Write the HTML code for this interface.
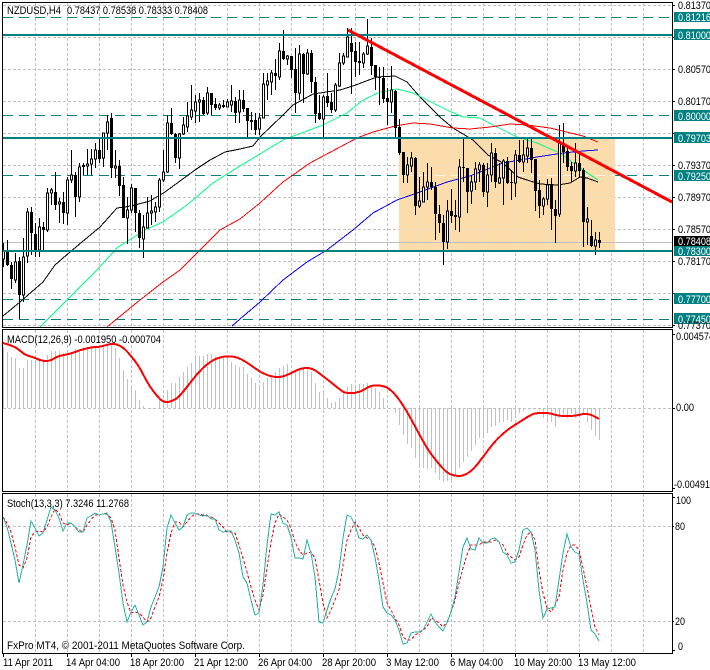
<!DOCTYPE html>
<html><head><meta charset="utf-8"><title>NZDUSD,H4</title>
<style>
html,body{margin:0;padding:0;background:#fff;width:710px;height:670px;overflow:hidden}
svg{display:block}
text{font-family:"Liberation Sans",sans-serif;font-size:11px;fill:#000}
.w{fill:#fff}
</style></head><body>
<svg width="710" height="670" viewBox="0 0 710 670" xmlns="http://www.w3.org/2000/svg">
<rect width="710" height="670" fill="#fff"/>
<g shape-rendering="crispEdges">
<!-- grid main -->
<path d="M35.5 3V327M67.5 3V327M99.5 3V327M131.5 3V327M163.5 3V327M195.5 3V327M227.5 3V327M259.5 3V327M291.5 3V327M323.5 3V327M355.5 3V327M387.5 3V327M419.5 3V327M451.5 3V327M483.5 3V327M515.5 3V327M547.5 3V327M579.5 3V327M611.5 3V327M643.5 3V327M3 5.5H672M3 37.5H672M3 69.5H672M3 101.5H672M3 133.5H672M3 165.5H672M3 197.5H672M3 229.5H672M3 261.5H672M3 293.5H672M3 325.5H672" stroke="#c0c0c0" stroke-dasharray="3 2" fill="none"/>
<!-- levels -->
<path d="M3 17.5H672M3 115.5H672M3 175.5H672M3 299.5H672M3 319.5H672" stroke="#008080" stroke-dasharray="10 6" fill="none"/>
<rect x="399" y="138" width="216" height="112" fill="#fddcab"/>
<path d="M419.5 138V250M451.5 138V250M483.5 138V250M515.5 138V250M547.5 138V250M579.5 138V250M611.5 138V250M399 165.5H615M399 197.5H615M399 229.5H615" stroke="#e9e2c6" stroke-dasharray="3 2" fill="none"/>
<path d="M403 175.5H615" stroke="#fff6e6" stroke-dasharray="10 6" fill="none"/>
<path d="M3 242.5H672" stroke="#c0c0c0" fill="none"/>
<!-- MAs -->
<path d="M3 316L20 302L43 282L55 265L70 252L100 227L117 208L125 207L135 205L150 201L165 192L180 181L195 170L210 160L225 152L240 149L253 146L260 137L283 115L293 105L313 94L340 90L353 86L377 77L395 76L407 82L420 97L440 117L453 128L473 140L480 147L488 155L503 163L518 177L527 180L540 184L558 185L570 183L580 177L587 178L598 182" stroke="#000" fill="none"/>
<path d="M40 327L67 300L97 270L118 247L147 229L163 222L187 205L213 183L240 166L283 140L323 125L347 113L363 100L380 92L397 89L413 93L427 100L447 110L463 117L480 118L493 125L517 137L537 143L560 153L580 168L598 180" stroke="#00ff7f" fill="none"/>
<path d="M107 327L140 300L163 282L180 270L200 250L220 230L240 219L260 203L283 182L310 163L340 147L357 138L373 132L395 126L413 123L430 124L453 128L470 129L490 127L510 124L527 125L550 128L583 136L598 142" stroke="#ff0000" fill="none"/>
<path d="M232 326L240 319L260 302L283 280L307 262L327 250L353 230L373 213L397 200L420 192L447 182L470 176L503 163L537 157L563 153L583 151L598 150" stroke="#0000ff" fill="none"/>
<!-- wicks -->
<path stroke="#000" fill="none" d="M3.5 243V267M7.5 240V266M11.5 262V289M15.5 253V283M19.5 257V319M23.5 238V302M27.5 208V263M31.5 207V255M35.5 223V257M39.5 218V257M43.5 222V250M47.5 188V232M51.5 188V205M55.5 172V210M59.5 198V223M63.5 192V224M67.5 177V225M71.5 150V183M75.5 172V217M79.5 163V202M83.5 163V175M87.5 149V175M91.5 149V175M95.5 143V168M99.5 138V163M103.5 133V167M107.5 115V150M111.5 113V178M115.5 150V178M119.5 160V196M123.5 177V218M127.5 197V244M131.5 184V213M135.5 188V232M139.5 210V248M143.5 215V258M147.5 197V228M151.5 195V225M155.5 202V222M159.5 178V212M163.5 150V182M167.5 115V173M171.5 108V135M175.5 133V163M179.5 133V169M183.5 117V135M187.5 102V132M191.5 85V120M195.5 95V123M199.5 93V122M203.5 97V115M207.5 87V115M211.5 93V115M215.5 98V110M219.5 103V110M223.5 100V108M227.5 99V107M231.5 85V112M235.5 97V123M239.5 90V123M243.5 90V112M247.5 108V137M251.5 112V130M255.5 113V135M259.5 113V135M263.5 73V118M267.5 73V100M271.5 70V95M275.5 59V90M279.5 43V80M283.5 30V60M287.5 55V65M291.5 56V78M295.5 48V113M299.5 45V100M303.5 53V103M307.5 49V75M311.5 50V93M315.5 77V123M319.5 95V120M323.5 95V139M327.5 73V107M331.5 93V113M335.5 83V112M339.5 53V87M343.5 53V65M347.5 28V57M351.5 28V94M355.5 42V77M359.5 42V75M363.5 52V68M367.5 19V55M371.5 38V75M375.5 65V90M379.5 67V105M383.5 67V103M387.5 88V125M391.5 66V113M395.5 90V139M399.5 119V155M403.5 152V183M407.5 157V183M411.5 152V172M415.5 157V215M419.5 177V208M423.5 172V202M427.5 163V200M431.5 167V190M435.5 182V240M439.5 205V233M443.5 215V265M447.5 200V249M451.5 189V223M455.5 200V230M459.5 159V232M463.5 137V182M467.5 168V213M471.5 176V204M475.5 162V190M479.5 162V182M483.5 163V197M487.5 163V207M491.5 143V182M495.5 148V188M499.5 163V184M503.5 159V205M507.5 157V184M511.5 170V200M515.5 150V197M519.5 140V163M523.5 140V172M527.5 138V163M531.5 137V173M535.5 159V211M539.5 180V218M543.5 197V215M547.5 179V205M551.5 178V230M555.5 200V243M559.5 125V217M563.5 123V163M567.5 147V171M571.5 162V182M575.5 143V177M579.5 153V178M583.5 168V247M587.5 207V245M591.5 220V247M595.5 232V255M599.5 232V248"/>
<!-- black bodies -->
<path fill="#000" d="M6 250h3v15h-3zM10 265h3v14h-3zM18 261h3v34h-3zM30 212h3v21h-3zM34 234h3v18h-3zM42 227h3v3h-3zM54 192h3v13h-3zM62 202h3v11h-3zM74 175h3v22h-3zM82 165h3v2h-3zM98 150h3v9h-3zM110 118h3v50h-3zM118 166h3v20h-3zM122 185h3v33h-3zM134 188h3v25h-3zM138 213h3v25h-3zM170 123h3v11h-3zM174 134h3v24h-3zM202 100h3v14h-3zM210 93h3v12h-3zM214 104h3v4h-3zM222 105h3v2h-3zM234 101h3v12h-3zM242 100h3v9h-3zM246 108h3v13h-3zM250 120h3v2h-3zM254 120h3v10h-3zM274 73h3v3h-3zM282 51h3v8h-3zM290 56h3v14h-3zM294 69h3v24h-3zM302 54h3v20h-3zM310 53h3v29h-3zM314 82h3v32h-3zM318 113h3v6h-3zM326 96h3v7h-3zM330 102h3v8h-3zM350 43h3v9h-3zM354 51h3v11h-3zM358 61h3v2h-3zM370 47h3v19h-3zM374 65h3v12h-3zM378 77h3v1h-3zM382 78h3v21h-3zM386 98h3v4h-3zM394 91h3v37h-3zM398 127h3v26h-3zM402 152h3v23h-3zM414 158h3v48h-3zM430 182h3v5h-3zM434 187h3v27h-3zM438 214h3v9h-3zM442 223h3v19h-3zM450 211h3v5h-3zM454 215h3v2h-3zM462 167h3v1h-3zM466 168h3v24h-3zM482 165h3v27h-3zM494 153h3v29h-3zM506 161h3v22h-3zM510 182h3v1h-3zM518 155h3v7h-3zM530 148h3v12h-3zM534 159h3v32h-3zM538 190h3v16h-3zM550 185h3v24h-3zM554 209h3v7h-3zM562 143h3v9h-3zM566 151h3v16h-3zM570 166h3v5h-3zM578 163h3v8h-3zM582 170h3v52h-3zM590 236h3v10h-3zM598 240h3v3h-3z"/>
<!-- white bodies -->
<path fill="#fff" stroke="#000" d="M2.5 251h2v8h-2zM14.5 262h2v18h-2zM22.5 257h2v38h-2zM26.5 212h2v44h-2zM38.5 227h2v23h-2zM46.5 193h2v37h-2zM50.5 190h2v3h-2zM58.5 202h2v2h-2zM66.5 180h2v33h-2zM70.5 175h2v5h-2zM78.5 167h2v30h-2zM86.5 164h2v2h-2zM90.5 159h2v5h-2zM94.5 150h2v9h-2zM102.5 133h2v25h-2zM106.5 122h2v11h-2zM114.5 166h2v2h-2zM126.5 210h2v8h-2zM130.5 188h2v22h-2zM142.5 227h2v12h-2zM146.5 213h2v15h-2zM150.5 211h2v2h-2zM154.5 207h2v5h-2zM158.5 180h2v27h-2zM162.5 172h2v8h-2zM166.5 123h2v49h-2zM178.5 134h2v24h-2zM182.5 125h2v9h-2zM186.5 116h2v11h-2zM190.5 110h2v7h-2zM194.5 102h2v9h-2zM198.5 100h2v2h-2zM206.5 93h2v20h-2zM218.5 105h2v3h-2zM226.5 102h2v5h-2zM230.5 101h2v4h-2zM238.5 100h2v12h-2zM258.5 118h2v11h-2zM262.5 84h2v34h-2zM266.5 81h2v4h-2zM270.5 73h2v9h-2zM278.5 51h2v26h-2zM286.5 56h2v3h-2zM298.5 54h2v39h-2zM306.5 53h2v21h-2zM322.5 97h2v22h-2zM334.5 85h2v25h-2zM338.5 63h2v23h-2zM342.5 56h2v7h-2zM346.5 37h2v20h-2zM362.5 54h2v9h-2zM366.5 46h2v8h-2zM390.5 90h2v12h-2zM406.5 165h2v10h-2zM410.5 158h2v8h-2zM418.5 201h2v5h-2zM422.5 187h2v15h-2zM426.5 182h2v5h-2zM446.5 211h2v31h-2zM458.5 167h2v50h-2zM470.5 182h2v9h-2zM474.5 169h2v13h-2zM478.5 165h2v5h-2zM486.5 175h2v17h-2zM490.5 153h2v22h-2zM498.5 178h2v5h-2zM502.5 161h2v17h-2zM514.5 155h2v28h-2zM522.5 155h2v7h-2zM526.5 148h2v8h-2zM542.5 199h2v7h-2zM546.5 185h2v14h-2zM558.5 143h2v71h-2zM574.5 163h2v8h-2zM586.5 219h2v3h-2zM594.5 240h2v6h-2z"/>
<!-- thick levels -->
<rect x="3" y="34" width="669" height="2" fill="#008080"/>
<rect x="3" y="137" width="669" height="2" fill="#008080"/>
<rect x="3" y="250" width="669" height="2" fill="#008080"/>
<!-- trend -->
<path d="M348 30L672 202" stroke="#ff0000" stroke-width="3" fill="none"/>
<!-- MACD grid -->
<path d="M35.5 330V491M67.5 330V491M99.5 330V491M131.5 330V491M163.5 330V491M195.5 330V491M227.5 330V491M259.5 330V491M291.5 330V491M323.5 330V491M355.5 330V491M387.5 330V491M419.5 330V491M451.5 330V491M483.5 330V491M515.5 330V491M547.5 330V491M579.5 330V491M611.5 330V491M643.5 330V491M3 408.5H672" stroke="#c0c0c0" stroke-dasharray="3 2" fill="none"/>
<!-- MACD hist -->
<path stroke="#c0c0c0" fill="none" d="M3.5 347V408M7.5 352V408M11.5 357V408M15.5 358V408M19.5 368V408M23.5 368V408M27.5 360V408M31.5 360V408M35.5 362V408M39.5 358V408M43.5 360V408M47.5 355V408M51.5 351V408M55.5 351V408M59.5 351V408M63.5 353V408M67.5 353V408M71.5 353V408M75.5 349V408M79.5 349V408M83.5 347V408M87.5 347V408M91.5 346V408M95.5 346V408M99.5 345V408M103.5 345V408M107.5 346V408M111.5 343V408M115.5 348V408M119.5 358V408M123.5 370V408M127.5 379V408M131.5 388V408M135.5 390V408M139.5 400V408M143.5 406V408M159.5 398V408M163.5 400V408M167.5 390V408M171.5 383V408M175.5 383V408M179.5 377V408M183.5 372V408M187.5 367V408M191.5 363V408M195.5 356V408M199.5 356V408M203.5 356V408M207.5 354V408M211.5 354V408M215.5 356V408M219.5 357V408M223.5 357V408M227.5 358V408M231.5 362V408M235.5 365V408M239.5 367V408M243.5 367V408M247.5 374V408M251.5 378V408M255.5 383V408M259.5 387V408M263.5 382V408M267.5 378V408M271.5 377V408M275.5 372V408M279.5 368V408M283.5 366V408M287.5 364V408M291.5 370V408M295.5 370V408M299.5 368V408M303.5 368V408M307.5 368V408M311.5 372V408M315.5 383V408M319.5 392V408M323.5 393V408M327.5 398V408M331.5 403V408M335.5 402V408M339.5 398V408M343.5 393V408M347.5 387V408M351.5 384V408M355.5 385V408M359.5 384V408M363.5 384V408M367.5 383V408M371.5 387V408M375.5 388V408M379.5 392V408M383.5 398V408M387.5 407V408M395.5 408V413M399.5 408V425M403.5 408V435M407.5 408V444M411.5 408V448M415.5 408V458M419.5 408V468M423.5 408V468M427.5 408V469M431.5 408V468M435.5 408V473M439.5 408V480M443.5 408V482M447.5 408V481M451.5 408V480M455.5 408V475M459.5 408V468M463.5 408V462M467.5 408V457M471.5 408V451M475.5 408V445M479.5 408V438M483.5 408V435M487.5 408V433M491.5 408V427M495.5 408V426M499.5 408V423M503.5 408V422M507.5 408V420M511.5 408V422M515.5 408V418M519.5 408V413M523.5 408V411M539.5 408V410M543.5 408V418M547.5 408V420M551.5 408V422M555.5 408V427M559.5 408V418M563.5 408V415M567.5 408V418M571.5 408V413M575.5 408V418M579.5 408V418M583.5 408V413M587.5 408V422M591.5 408V430M595.5 408V436M599.5 408V440"/>
<!-- MACD signal -->
<path stroke="#ff0000" stroke-width="2" fill="none" d="M3 343Q10 345 13.5 346.5Q17 348 21 351.5Q25 355 29 356Q33 357 37.5 359Q42 361 46 361Q50 361 54 358.5Q58 356 64 355Q70 354 75 352Q80 350 86.5 348.5Q93 347 96.5 347Q100 347 106.5 345Q113 343 118 345Q123 347 127.5 352Q132 357 136 362.5Q140 368 144 376Q148 384 152.5 390Q157 396 160 399Q163 402 166.5 402Q170 402 174 400Q178 398 182.5 392.5Q187 387 192 380.5Q197 374 202 369Q207 364 212 361Q217 358 222 357Q227 356 232 356.5Q237 357 242.5 360Q248 363 254 367.5Q260 372 266 374.5Q272 377 277.5 377Q283 377 288 374.5Q293 372 297.5 370Q302 368 307 368Q312 368 317.5 372Q323 376 328 380Q333 384 338 388Q343 392 345 392.5Q347 393 351 393Q355 393 358.5 392Q362 391 366 388.5Q370 386 374 385.5Q378 385 382.5 386Q387 387 391 390.5Q395 394 399 399.5Q403 405 406.5 411Q410 417 414 424.5Q418 432 423 441Q428 450 433 456.5Q438 463 442.5 468Q447 473 451 474.5Q455 476 459 476Q463 476 468 473Q473 470 478 463.5Q483 457 489 449Q495 441 501 435.5Q507 430 512.5 426.5Q518 423 525 418.5Q532 414 535 413.5Q538 413 544 413Q550 413 554 414.5Q558 416 566.5 416Q575 416 578.5 415Q582 414 586 414Q590 414 594.5 416.5L599 419"/>
<!-- Stoch grid -->
<path d="M35.5 494V653M67.5 494V653M99.5 494V653M131.5 494V653M163.5 494V653M195.5 494V653M227.5 494V653M259.5 494V653M291.5 494V653M323.5 494V653M355.5 494V653M387.5 494V653M419.5 494V653M451.5 494V653M483.5 494V653M515.5 494V653M547.5 494V653M579.5 494V653M611.5 494V653M643.5 494V653M3 526.5H672M3 621.5H672" stroke="#c0c0c0" stroke-dasharray="3 2" fill="none"/>
<!-- Stoch -->
<path stroke="#ff0000" stroke-dasharray="3 2" fill="none" d="M3 517L7 523L11 532L15 547L19 565L23 568L27 558L31 537L35 532L39 531L43 532L47 527L51 517L55 509L59 513L63 523L67 525L71 523L75 527L79 530L83 532L87 525L91 520L95 515L99 515L103 514L107 514L111 518L115 530L119 558L123 585L127 602L131 613L135 612L139 613L143 617L147 622L151 618L155 607L159 597L163 580L167 553L171 533L175 522L179 522L183 527L187 522L191 517L195 514L199 514L203 515L207 516L211 517L215 519L219 523L223 527L227 532L231 532L235 533L239 545L243 558L247 572L251 587L255 600L259 610L263 595L267 568L271 542L275 523L279 514L283 517L287 520L291 528L295 542L299 550L303 555L307 553L311 552L315 558L319 580L323 603L327 618L331 610L335 600L339 590L343 565L347 540L351 530L355 522L359 528L363 535L367 538L371 540L375 547L379 563L383 583L387 603L391 610L395 618L399 625L403 637L407 640L411 640L415 635L419 633L423 630L427 627L431 618L435 620L439 623L443 627L447 622L451 612L455 600L459 583L463 568L467 555L471 545L475 545L479 545L483 542L487 542L491 542L495 540L499 542L503 545L507 553L511 557L515 560L519 557L523 545L527 535L531 532L535 540L539 570L543 593L547 608L551 612L555 605L559 597L563 570L567 553L571 545L575 545L579 550L583 568L587 587L591 608L595 627L599 635"/>
<path stroke="#20b2aa" fill="none" d="M3 517L7 527L11 543L15 560L19 583L23 565L27 545L31 521L35 528L39 536L43 533L47 520L51 507L55 510L59 518L63 531L67 523L71 523L75 527L79 532L83 532L87 518L91 516L95 513L99 515L103 514L107 513L111 522L115 547L119 573L123 603L127 622L131 612L135 605L139 615L143 625L147 622L151 607L155 597L159 587L163 567L167 528L171 515L175 523L179 530L183 527L187 515L191 513L195 513L199 515L203 516L207 515L211 519L215 519L219 530L223 532L227 531L231 531L235 540L239 553L243 577L247 583L251 600L255 615L259 613L263 585L267 545L271 514L275 515L279 512L283 523L287 525L291 537L295 558L299 558L303 559L307 540L311 553L315 577L319 622L323 623L327 610L331 598L335 589L339 570L343 538L347 515L351 517L355 525L359 538L363 539L367 535L371 540L375 557L379 580L383 607L387 613L391 615L395 620L399 630L403 644L407 643L411 633L415 632L419 632L423 630L427 622L431 614L435 622L439 627L443 631L447 623L451 612L455 597L459 572L463 547L467 538L471 549L475 550L479 538L483 543L487 543L491 539L495 538L499 542L503 552L507 555L511 563L515 562L519 550L523 530L527 528L531 532L535 550L539 590L543 618L547 609L551 608L555 607L559 580L563 553L567 534L571 547L575 552L579 554L583 580L587 603L591 630L595 634L599 641"/>
<!-- frames -->
<path stroke="#000" fill="none" d="M2.5 2.5H672.5V327.5H2.5ZM2.5 329.5H672.5V491.5H2.5ZM2.5 493.5H672.5V653.5H2.5Z"/>
<!-- ticks -->
<path stroke="#000" fill="none" d="M673 5.5h2M673 37.5h2M673 69.5h2M673 101.5h2M673 133.5h2M673 165.5h2M673 197.5h2M673 229.5h2M673 261.5h2M673 293.5h2M673 325.5h2M673 334.5h2M673 408.5h2M673 488.5h2M673 497.5h2M673 526.5h1M673 621.5h1M673 650.5h2M3.5 654v3M67.5 654v3M131.5 654v3M195.5 654v3M259.5 654v3M323.5 654v3M387.5 654v3M451.5 654v3M515.5 654v3M579.5 654v3"/>
<!-- label boxes -->
<path fill="#008080" d="M674 12h36v10h-36zM674 29h36v11h-36zM674 110h36v11h-36zM674 132h36v11h-36zM674 170h36v11h-36zM674 245h36v11h-36zM674 293h36v11h-36zM674 313h36v11h-36z"/>
<path fill="#000" d="M674 236h36v10h-36z"/>
</g>
<text x="7" y="14" textLength="54" lengthAdjust="spacingAndGlyphs">NZDUSD,H4</text>
<text x="67" y="14" textLength="141" lengthAdjust="spacingAndGlyphs">0.78437 0.78538 0.78333 0.78408</text>
<text x="7" y="343" textLength="154" lengthAdjust="spacingAndGlyphs">MACD(12,26,9) -0.001950 -0.000704</text>
<text x="7" y="507" textLength="122" lengthAdjust="spacingAndGlyphs">Stoch(13,3,3) 7.3246 11.2768</text>
<text x="7" y="649" textLength="238" lengthAdjust="spacingAndGlyphs">FxPro MT4, © 2001-2011 MetaQuotes Software Corp.</text>
<!-- axis -->
<text x="678" y="9" textLength="33" lengthAdjust="spacingAndGlyphs">0.81370</text>
<text x="678" y="73" textLength="33" lengthAdjust="spacingAndGlyphs">0.80570</text>
<text x="678" y="105" textLength="33" lengthAdjust="spacingAndGlyphs">0.80170</text>
<text x="678" y="169" textLength="33" lengthAdjust="spacingAndGlyphs">0.79370</text>
<text x="678" y="201" textLength="33" lengthAdjust="spacingAndGlyphs">0.78970</text>
<text x="678" y="233" textLength="33" lengthAdjust="spacingAndGlyphs">0.78570</text>
<text x="678" y="265" textLength="33" lengthAdjust="spacingAndGlyphs">0.78170</text>
<text x="678" y="329" textLength="33" lengthAdjust="spacingAndGlyphs">0.77370</text>
<text class="w" x="678" y="21" textLength="33" lengthAdjust="spacingAndGlyphs">0.81216</text>
<text class="w" x="678" y="39" textLength="33" lengthAdjust="spacingAndGlyphs">0.81000</text>
<text class="w" x="678" y="120" textLength="33" lengthAdjust="spacingAndGlyphs">0.80000</text>
<text class="w" x="678" y="142" textLength="33" lengthAdjust="spacingAndGlyphs">0.79703</text>
<text class="w" x="678" y="180" textLength="33" lengthAdjust="spacingAndGlyphs">0.79250</text>
<text class="w" x="678" y="245" textLength="33" lengthAdjust="spacingAndGlyphs">0.78408</text>
<text class="w" x="678" y="255" textLength="33" lengthAdjust="spacingAndGlyphs">0.78300</text>
<text class="w" x="678" y="303" textLength="33" lengthAdjust="spacingAndGlyphs">0.77700</text>
<text class="w" x="678" y="323" textLength="33" lengthAdjust="spacingAndGlyphs">0.77450</text>
<text x="676" y="340" textLength="38" lengthAdjust="spacingAndGlyphs">0.004574</text>
<text x="676" y="411" textLength="18" lengthAdjust="spacingAndGlyphs">0.00</text>
<text x="674" y="488" textLength="36" lengthAdjust="spacingAndGlyphs">-0.00491</text>
<text x="676" y="504" textLength="15" lengthAdjust="spacingAndGlyphs">100</text>
<text x="675" y="530" textLength="10" lengthAdjust="spacingAndGlyphs">80</text>
<text x="675" y="625" textLength="10" lengthAdjust="spacingAndGlyphs">20</text>
<text x="678" y="650" textLength="5" lengthAdjust="spacingAndGlyphs">0</text>
<!-- time -->
<text x="3" y="666" textLength="50" lengthAdjust="spacingAndGlyphs">11 Apr 2011</text>
<text x="66" y="666" textLength="54" lengthAdjust="spacingAndGlyphs">14 Apr 04:00</text>
<text x="130" y="666" textLength="54" lengthAdjust="spacingAndGlyphs">18 Apr 20:00</text>
<text x="194" y="666" textLength="54" lengthAdjust="spacingAndGlyphs">21 Apr 12:00</text>
<text x="258" y="666" textLength="54" lengthAdjust="spacingAndGlyphs">26 Apr 04:00</text>
<text x="322" y="666" textLength="54" lengthAdjust="spacingAndGlyphs">28 Apr 20:00</text>
<text x="386" y="666" textLength="53" lengthAdjust="spacingAndGlyphs">3 May 12:00</text>
<text x="450" y="666" textLength="53" lengthAdjust="spacingAndGlyphs">6 May 04:00</text>
<text x="514" y="666" textLength="58" lengthAdjust="spacingAndGlyphs">10 May 20:00</text>
<text x="578" y="666" textLength="58" lengthAdjust="spacingAndGlyphs">13 May 12:00</text>
</svg>
</body></html>
